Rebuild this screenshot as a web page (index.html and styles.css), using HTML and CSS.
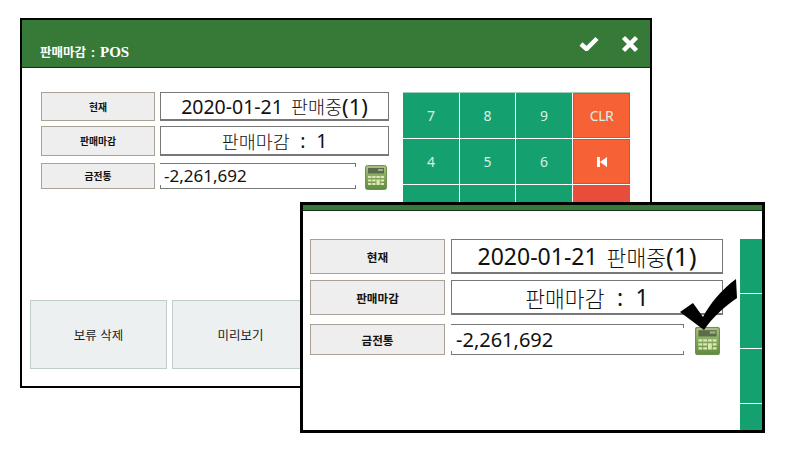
FILE: index.html
```html
<!DOCTYPE html>
<html lang="ko">
<head>
    <meta charset="UTF-8">
    <meta name="viewport" content="width=device-width, initial-scale=1.0">
    <title>판매마감 : POS</title>
    <link rel="stylesheet" href="styles.css">
</head>
<body>
    <!-- ventana de fondo -->
    <div class="window window-back">
        <div class="title-bar">
            <h1 class="title">판매마감 : <span class="title-pos">POS</span></h1>
            <svg class="bar-icon icon-check" viewBox="0 0 20 15">
                <path d="M2 8 L7.5 13 L18 2.5" />
            </svg>
            <svg class="bar-icon icon-close" viewBox="0 0 18 18">
                <path d="M2.5 2.5 L15.5 15.5 M15.5 2.5 L2.5 15.5" />
            </svg>
        </div>
        <div class="main">
            <div class="fields">
                <div class="row row-a">
                    <div class="label">현재</div>
                    <div class="value">2020-01-21 <span class="hangul">판매중</span><span class="count">(1)</span></div>
                </div>
                <div class="row row-b">
                    <div class="label">판매마감</div>
                    <div class="value value-wide"><span class="hangul">판매마감</span> : 1</div>
                </div>
                <div class="row row-c">
                    <div class="label">금전통</div>
                    <div class="value value-input">-2,261,692</div>
                    <svg class="calc" viewBox="0 0 22 25"><use href="#calc-icon" /></svg>
                </div>
            </div>
            <div class="keypad">
                <button class="key">7</button>
                <button class="key">8</button>
                <button class="key">9</button>
                <button class="key key-orange key-clr">CLR</button>
                <button class="key">4</button>
                <button class="key">5</button>
                <button class="key">6</button>
                <button class="key key-orange">
                    <svg class="icon-first" viewBox="0 0 10 10">
                        <path d="M0 0 H3 V10 H0 Z M3 5 L10 0 V10 Z" />
                    </svg>
                </button>
                <button class="key">1</button>
                <button class="key">2</button>
                <button class="key">3</button>
                <button class="key key-red"></button>
            </div>
        </div>
        <div class="actions">
            <button class="action">보류 삭제</button>
            <button class="action">미리보기</button>
        </div>
    </div>

    <!-- ampliacion encima -->
    <div class="window window-front">
        <div class="title-bar"></div>
        <div class="main">
            <div class="fields">
                <div class="row row-a">
                    <div class="label">현재</div>
                    <div class="value">2020-01-21 <span class="hangul">판매중</span><span class="count">(1)</span></div>
                </div>
                <div class="row row-b">
                    <div class="label">판매마감</div>
                    <div class="value value-wide"><span class="hangul">판매마감</span> : 1</div>
                </div>
                <div class="row row-c">
                    <div class="label">금전통</div>
                    <div class="value value-input">-2,261,692</div>
                    <svg class="calc" viewBox="0 0 22 25"><use href="#calc-icon" /></svg>
                </div>
            </div>
            <div class="keypad">
                <div class="key"></div>
                <div class="key"></div>
                <div class="key"></div>
                <div class="key"></div>
            </div>
        </div>
    </div>

    <svg class="big-check" viewBox="0 0 60 54">
        <path d="M0 33 L13 24 L23 38 C29 26 42 10 56 0 L57 19 C45 27 32 39 24 51 Z" />
    </svg>

    <!-- icono de calculadora -->
    <svg class="defs" width="0" height="0">
        <defs>
            <linearGradient id="calc-body" x1="0" y1="0" x2="0" y2="1">
                <stop offset="0" stop-color="#a9c47e" />
                <stop offset="1" stop-color="#5f8a3c" />
            </linearGradient>
            <symbol id="calc-icon" viewBox="0 0 22 25">
                <rect x="0.5" y="0.5" width="21" height="24" rx="2" fill="url(#calc-body)" stroke="#6f8f55" />
                <rect x="3" y="3" width="16" height="5.5" fill="#5d6b4d" />
                <rect x="13" y="4" width="5" height="2" fill="#a3ad90" />
                <g fill="#dbe8b4">
                    <rect x="3" y="11" width="3.4" height="2" />
                    <rect x="7.2" y="11" width="3.4" height="2" />
                    <rect x="11.4" y="11" width="3.4" height="2" />
                    <rect x="15.6" y="11" width="3.4" height="2" />
                    <rect x="3" y="14.5" width="3.4" height="2" />
                    <rect x="7.2" y="14.5" width="3.4" height="2" />
                    <rect x="11.4" y="14.5" width="3.4" height="5.5" />
                    <rect x="15.6" y="14.5" width="3.4" height="2" />
                    <rect x="3" y="18" width="3.4" height="2" />
                    <rect x="7.2" y="18" width="3.4" height="2" />
                    <rect x="15.6" y="18" width="3.4" height="2" />
                </g>
            </symbol>
        </defs>
    </svg>
</body>
</html>
```

FILE: styles.css
```css
body {
    margin: 0;
    height: 449px;
    overflow: hidden;
    position: relative;
    background: #fff;
    color: #111;
    font-family: "Noto Sans", "Noto Sans CJK KR", sans-serif;
}

.defs {
    position: absolute;
}

/* Ventanas */
.window {
    position: absolute;
    box-sizing: border-box;
    display: flex;
    flex-direction: column;
    background: #fff;
    border-style: solid;
    border-color: #000;
    overflow: hidden;
}

.window-back {
    left: 20px;
    top: 18px;
    width: 632px;
    height: 370px;
    border-width: 2px;
}

.window-front {
    left: 300px;
    top: 202px;
    width: 465px;
    height: 231px;
    border-width: 3px;
}

.title-bar {
    display: flex;
    align-items: center;
    background: #377a38;
    border-bottom: 1px solid #14301a;
    box-sizing: border-box;
}

.window-back .title-bar {
    height: 48px;
    padding: 0 11px 0 18px;
}

.window-front .title-bar {
    height: 6px;
}

.title {
    margin: 16px auto 0 0;
    font-size: 12.5px;
    font-weight: 700;
    word-spacing: 2px;
    color: #fff;
}

.title-pos {
    font-family: "Liberation Serif", serif;
    font-size: 15px;
}

.bar-icon {
    fill: none;
    stroke: #fff;
    stroke-width: 4.5;
}

.icon-check {
    width: 20px;
    height: 15px;
    margin-right: 22px;
}

.icon-close {
    width: 18px;
    height: 18px;
}

/* Contenido */
.main {
    display: flex;
}

.window-back .main {
    padding: 24px 0 0 19px;
    gap: 14px;
}

.window-front .main {
    flex: 1;
    padding: 28px 0 0 7px;
    gap: 17px;
    min-height: 0;
}

.row {
    display: flex;
    align-items: center;
}

.label,
.value {
    box-sizing: border-box;
    display: flex;
    align-items: center;
    justify-content: center;
}

.label {
    height: 100%;
    flex: none;
    background: #eeeeee;
    border: 1px solid #a9a294;
    font-weight: 700;
}

.value {
    height: 100%;
    flex: none;
    white-space: pre;
    border: 1px solid #777;
    border-bottom-width: 2px;
}

.hangul {
    font-weight: 300;
}

.value-input {
    justify-content: flex-start;
    border-width: 1px 0;
    /* marcas pequeñas en las esquinas del campo */
    background:
        linear-gradient(#777, #777) left bottom / 1px 3px no-repeat,
        linear-gradient(#777, #777) right bottom / 1px 3px no-repeat,
        linear-gradient(#777, #777) right top / 1px 3px no-repeat;
}

.calc {
    flex: none;
}

/* Tamaños de la ventana de fondo */
.window-back .fields {
    width: 348px;
}

.window-back .row {
    gap: 5px;
}

.window-back .row-a {
    height: 29px;
}

.window-back .row-b {
    height: 30px;
    margin-top: 5px;
}

.window-back .row-c {
    height: 26px;
    margin-top: 7px;
}

.window-back .label {
    width: 114px;
    font-size: 9.8px;
}

.window-back .value {
    width: 229px;
    font-size: 19.5px;
    word-spacing: 3px;
}

.window-back .value-wide {
    word-spacing: 5.5px;
}

.window-back .hangul {
    font-size: 18.5px;
}

.window-back .count {
    font-size: 22px;
}

.window-back .value-input {
    width: 196px;
    padding: 0 0 2px 4px;
    font-size: 17px;
}

.window-back .calc {
    width: 22px;
    height: 25px;
    margin: 3px 0 0 4px;
}

/* Tamaños de la ampliacion */
.window-front .fields {
    width: 413px;
}

.window-front .row {
    gap: 6px;
}

.window-front .row-a {
    height: 35px;
}

.window-front .row-b {
    height: 35px;
    margin-top: 6px;
}

.window-front .row-c {
    height: 31px;
    margin-top: 9px;
}

.window-front .label {
    width: 135px;
    font-size: 11.6px;
}

.window-front .value {
    width: 272px;
    font-size: 23px;
    word-spacing: 3px;
}

.window-front .value-wide {
    word-spacing: 6.5px;
}

.window-front .hangul {
    font-size: 21.5px;
}

.window-front .count {
    font-size: 26px;
}

.window-front .value-input {
    width: 233px;
    padding-left: 5px;
    font-size: 20px;
}

.window-front .calc {
    width: 25px;
    height: 30px;
    margin: 3px 0 0 5px;
}

/* Teclado */
.keypad {
    display: grid;
    gap: 1px;
    flex: none;
}

.window-back .keypad {
    width: 227px;
    grid-template-columns: 56px 55px 56px 57px;
    grid-auto-rows: 45px;
    border-top: 1px solid #9fcfb8;
}

.window-front .keypad {
    width: 22px;
    grid-auto-rows: 54px;
}

.key {
    padding: 0;
    border: none;
    display: flex;
    align-items: center;
    justify-content: center;
    background: #15a06f;
    color: #d9f0e4;
    font-family: "Noto Sans", sans-serif;
    font-size: 14px;
}

.key-orange {
    background: #f66135;
    box-shadow: inset 0 0 0 1px #d9502c;
}

.key-clr {
    letter-spacing: -0.5px;
}

.key-red {
    background: #e84d3c;
}

.icon-first {
    width: 10px;
    height: 10px;
    fill: #fff;
}

/* Botones de abajo */
.actions {
    display: flex;
    gap: 5px;
    margin-top: auto;
    padding: 0 0 17px 8px;
}

.action {
    box-sizing: border-box;
    flex: none;
    width: 137px;
    height: 69px;
    padding-bottom: 2px;
    background: #ecf0f1;
    border: 1px solid #bfcccc;
    color: #222;
    font-family: "Noto Sans CJK KR", sans-serif;
    font-size: 12.5px;
}

/* Marca grande sobre la ampliacion */
.big-check {
    position: absolute;
    left: 680px;
    top: 279px;
    width: 60px;
    height: 54px;
    fill: #000;
}
```
